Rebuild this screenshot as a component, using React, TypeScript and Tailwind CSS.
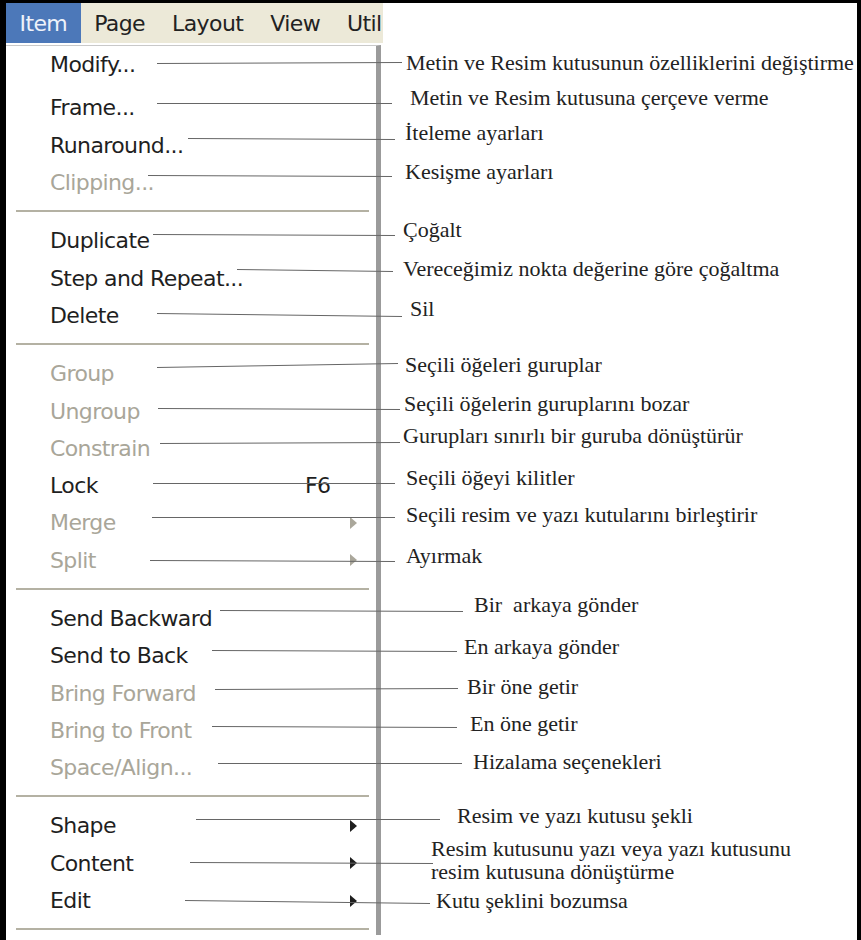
import React from "react";

type Row =
  | { kind: "item"; label: string; off?: boolean; keys?: string; arrow?: boolean; first?: boolean }
  | { kind: "sep" };

const rows: Row[] = [
  { kind: "item", label: "Modify...", first: true },
  { kind: "item", label: "Frame..." },
  { kind: "item", label: "Runaround..." },
  { kind: "item", label: "Clipping...", off: true },
  { kind: "sep" },
  { kind: "item", label: "Duplicate" },
  { kind: "item", label: "Step and Repeat..." },
  { kind: "item", label: "Delete" },
  { kind: "sep" },
  { kind: "item", label: "Group", off: true },
  { kind: "item", label: "Ungroup", off: true },
  { kind: "item", label: "Constrain", off: true },
  { kind: "item", label: "Lock", keys: "F6" },
  { kind: "item", label: "Merge", off: true, arrow: true },
  { kind: "item", label: "Split", off: true, arrow: true },
  { kind: "sep" },
  { kind: "item", label: "Send Backward" },
  { kind: "item", label: "Send to Back" },
  { kind: "item", label: "Bring Forward", off: true },
  { kind: "item", label: "Bring to Front", off: true },
  { kind: "item", label: "Space/Align...", off: true },
  { kind: "sep" },
  { kind: "item", label: "Shape", arrow: true },
  { kind: "item", label: "Content", arrow: true },
  { kind: "item", label: "Edit", arrow: true },
  { kind: "sep" },
];

const menus = ["Item", "Page", "Layout", "View", "Util"];

// callout lines: x1, y1, x2, y2
const leaders: [number, number, number, number][] = [
  [157, 63, 402, 62],
  [157, 103, 392, 103],
  [188, 138, 395, 139],
  [148, 175, 392, 176],
  [153, 234, 395, 235],
  [237, 269, 393, 271],
  [157, 313, 402, 316],
  [157, 367, 398, 363],
  [158, 408, 400, 409],
  [160, 443, 400, 442],
  [153, 483, 395, 483],
  [152, 517, 395, 517],
  [150, 560, 395, 561],
  [220, 610, 463, 611],
  [212, 650, 457, 651],
  [215, 689, 458, 688],
  [212, 726, 457, 727],
  [218, 763, 462, 763],
  [196, 819, 440, 819],
  [190, 862, 433, 863],
  [185, 900, 430, 903],
];

const notes: { text: string; pos: string }[] = [
  { text: "Metin ve Resim kutusunun özelliklerini değiştirme", pos: "left-[406px] top-[52px]" },
  { text: "Metin ve Resim kutusuna çerçeve verme", pos: "left-[410px] top-[87px]" },
  { text: "İteleme ayarları", pos: "left-[405px] top-[122px]" },
  { text: "Kesişme ayarları", pos: "left-[405px] top-[161px]" },
  { text: "Çoğalt", pos: "left-[403px] top-[219px]" },
  { text: "Vereceğimiz nokta değerine göre çoğaltma", pos: "left-[403px] top-[258px]" },
  { text: "Sil", pos: "left-[410px] top-[298px]" },
  { text: "Seçili öğeleri guruplar", pos: "left-[405px] top-[354px]" },
  { text: "Seçili öğelerin guruplarını bozar", pos: "left-[404px] top-[393px]" },
  { text: "Gurupları sınırlı bir guruba dönüştürür", pos: "left-[403px] top-[425px]" },
  { text: "Seçili öğeyi kilitler", pos: "left-[406px] top-[467px]" },
  { text: "Seçili resim ve yazı kutularını birleştirir", pos: "left-[406px] top-[504px]" },
  { text: "Ayırmak", pos: "left-[406px] top-[545px]" },
  { text: "Bir  arkaya gönder", pos: "left-[474px] top-[594px]" },
  { text: "En arkaya gönder", pos: "left-[464px] top-[636px]" },
  { text: "Bir öne getir", pos: "left-[467px] top-[676px]" },
  { text: "En öne getir", pos: "left-[470px] top-[713px]" },
  { text: "Hizalama seçenekleri", pos: "left-[473px] top-[751px]" },
  { text: "Resim ve yazı kutusu şekli", pos: "left-[457px] top-[805px]" },
  { text: "Resim kutusunu yazı veya yazı kutusunu\nresim kutusuna dönüştürme", pos: "left-[431px] top-[837px] leading-[23px]" },
  { text: "Kutu şeklini bozumsa", pos: "left-[436px] top-[890px]" },
];

function Arrow({ off }: { off?: boolean }) {
  return (
    <svg width="8" height="12" viewBox="0 0 8 12" className="ml-auto mr-[18px]">
      <polygon points="0,0 7,6 0,12" fill={off ? "#aaa79b" : "#1e1e1e"} />
    </svg>
  );
}

function MenuRow({ row }: { row: Row }) {
  if (row.kind === "sep") {
    return (
      <div className="h-[21px] pt-[9px] pl-[10px] pr-[7px]">
        <div className="h-[2px] bg-[#b4b1a3]" />
      </div>
    );
  }
  const size = row.first ? "h-[43.3px] items-start pt-[1.5px]" : "h-[37.3px] items-center";
  return (
    <div className={`flex pl-[44px] ${size} ${row.off ? "text-[#a9a699]" : "text-[#1f1f1f]"}`}>
      <span className="w-[255px] whitespace-nowrap">{row.label}</span>
      {row.keys && <span>{row.keys}</span>}
      {row.arrow && <Arrow off={row.off} />}
    </div>
  );
}

export default function App() {
  return (
    <div className="relative w-[861px] h-[940px] overflow-hidden bg-white border-l-[6px] border-t-[3px] border-r-[4px] border-black font-['DejaVu_Sans',sans-serif] text-[22px] tracking-[-0.6px]">
      {/* menu bar */}
      <div className="flex h-[40px] w-[377px] bg-[#ece9d8] overflow-hidden">
        {menus.map((m, i) => (
          <div
            key={m}
            className={`flex items-center px-[13.5px] whitespace-nowrap ${i === 0 ? "bg-[#4c78b9] text-[#eef2fa]" : "text-[#222]"}`}
          >
            {m}
          </div>
        ))}
      </div>

      {/* dropdown */}
      <div className="mt-[2px] w-[375px] h-[890px] border-t border-t-[#c9c9c9] border-r-[5px] border-r-[#9b9b9b]">
        {rows.map((r, i) => (
          <MenuRow key={i} row={r} />
        ))}
      </div>

      {/* callouts */}
      <div className="absolute left-[-6px] top-[-3px] w-[861px] h-[940px] pointer-events-none">
        <svg width="861" height="940" viewBox="0 0 861 940" className="absolute inset-0">
          {leaders.map(([x1, y1, x2, y2], i) => (
            <line key={i} x1={x1} y1={y1 + 0.5} x2={x2} y2={y2 + 0.5} stroke="#666" strokeWidth="1" />
          ))}
        </svg>
        {notes.map((n) => (
          <div
            key={n.text}
            className={`absolute whitespace-pre font-['Liberation_Serif',serif] text-[22px] leading-[22px] tracking-normal text-[#222] ${n.pos}`}
          >
            {n.text}
          </div>
        ))}
      </div>
    </div>
  );
}
